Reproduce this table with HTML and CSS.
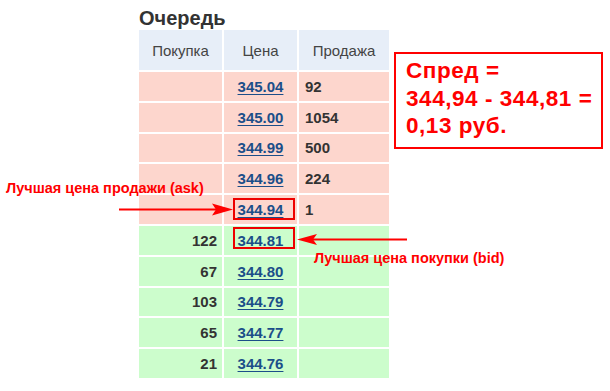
FILE: index.html
```html
<!DOCTYPE html>
<html lang="ru">
<head>
<meta charset="utf-8">
<link rel="stylesheet" href="styles.css">
</head>
<body>
<div class="page">
  <div class="book">
    <h2 class="title">Очередь</h2>
    <div class="grid">
      <div class="hd">Покупка</div><div class="hd">Цена</div><div class="hd">Продажа</div>

      <div class="ask buy"></div><div class="ask price"><a href="#">345.04</a></div><div class="ask sell">92</div>
      <div class="ask buy"></div><div class="ask price"><a href="#">345.00</a></div><div class="ask sell">1054</div>
      <div class="ask buy"></div><div class="ask price"><a href="#">344.99</a></div><div class="ask sell">500</div>
      <div class="ask buy"></div><div class="ask price"><a href="#">344.96</a></div><div class="ask sell">224</div>
      <div class="ask buy"></div><div class="ask price"><a href="#">344.94</a></div><div class="ask sell">1</div>

      <div class="bid buy">122</div><div class="bid price"><a href="#">344.81</a></div><div class="bid sell"></div>
      <div class="bid buy">67</div><div class="bid price"><a href="#">344.80</a></div><div class="bid sell"></div>
      <div class="bid buy">103</div><div class="bid price"><a href="#">344.79</a></div><div class="bid sell"></div>
      <div class="bid buy">65</div><div class="bid price"><a href="#">344.77</a></div><div class="bid sell"></div>
      <div class="bid buy">21</div><div class="bid price"><a href="#">344.76</a></div><div class="bid sell"></div>
    </div>
  </div>

  <div class="spread">Спред =<br>344,94 - 344,81 =<br>0,13 руб.</div>

  <div class="hl hl-ask"></div>
  <div class="hl hl-bid"></div>

  <div class="note note-ask">Лучшая цена продажи (ask)</div>
  <div class="note note-bid">Лучшая цена покупки (bid)</div>

  <svg class="arrows" width="610" height="391" viewBox="0 0 610 391">
    <line x1="119" y1="209.5" x2="218" y2="209.5" stroke="#f00" stroke-width="2"/>
    <polygon points="233,209.5 212,203.5 216,209.5 212,215.5" fill="#f00"/>
    <line x1="312" y1="239.5" x2="407" y2="239.5" stroke="#f00" stroke-width="2"/>
    <polygon points="297,239.5 317,234 313,239.5 317,245" fill="#f00"/>
  </svg>
</div>
</body>
</html>
```

FILE: styles.css
```css
html, body {
  margin: 0;
  padding: 0;
  background: #fff;
}

.page {
  position: relative;
  width: 610px;
  height: 391px;
  overflow: hidden;
  font-family: "Liberation Sans", Arial, sans-serif;
}

.book {
  margin-left: 139px;
  width: 250px;
}

.title {
  margin: 0;
  padding-top: 6px;
  font-size: 20px;
  line-height: 24px;
  font-weight: bold;
  color: #333;
}

.grid {
  display: grid;
  grid-template-columns: 83px 73px 90px;
  grid-template-rows: 40px;
  grid-auto-rows: 28.8px;
  column-gap: 2px;
  row-gap: 2px;
}

.hd {
  background: #e7eef8;
  color: #444;
  font-size: 15px;
  display: flex;
  align-items: center;
  justify-content: center;
}

.ask { background: #fdd6cd; }
.bid { background: #ccfdcc; }

.buy, .sell, .price {
  display: flex;
  align-items: center;
  font-size: 15px;
  font-weight: bold;
  color: #333;
}

.buy {
  justify-content: flex-end;
  padding-right: 5px;
}

.sell {
  padding-left: 6px;
}

.price {
  justify-content: center;
}

.price a {
  color: #1b4e89;
  text-decoration: underline;
  text-underline-offset: 2px;
}

.spread {
  position: absolute;
  left: 394px;
  top: 52px;
  width: 209px;
  height: 97px;
  box-sizing: border-box;
  border: 2px solid #f00;
  color: #f00;
  font-weight: bold;
  font-size: 22.5px;
  letter-spacing: 0.55px;
  line-height: 27.5px;
  padding: 3.4px 0 0 10px;
}

.hl {
  position: absolute;
  left: 233px;
  width: 62px;
  height: 22px;
  border: 2px solid #e00;
  box-sizing: border-box;
}

.hl-ask { top: 198px; }
.hl-bid { top: 227px; }

.note {
  position: absolute;
  color: #f00;
  font-weight: bold;
  font-size: 14.5px;
  line-height: 18px;
  white-space: nowrap;
}

.note-ask { left: 6px; top: 179px; }
.note-bid { left: 314px; top: 249px; }

.arrows {
  position: absolute;
  left: 0;
  top: 0;
  pointer-events: none;
}
```
